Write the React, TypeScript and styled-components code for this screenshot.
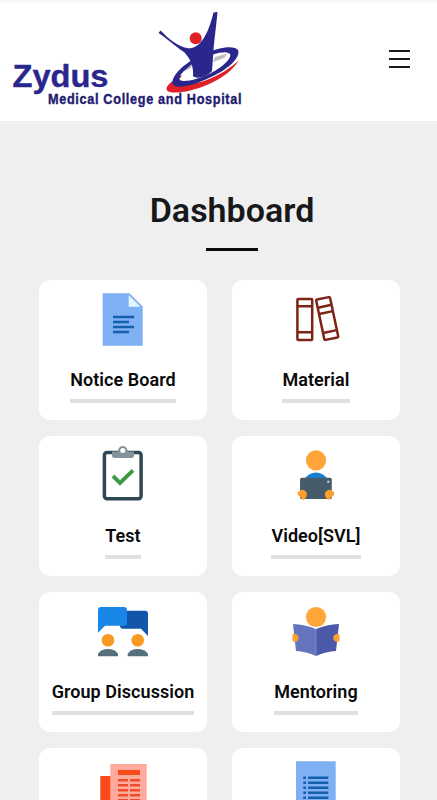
import React from 'react';
import styled, { createGlobalStyle } from 'styled-components';

const GlobalStyle = createGlobalStyle`
  * { box-sizing: border-box; }
  html, body { margin: 0; padding: 0; background: #efefef; }
  body { font-family: Roboto, 'Liberation Sans', sans-serif; overflow: hidden; }
`;

const Page = styled.div`
  height: 800px;
  overflow: hidden;
  background: #efefef;
`;

const Header = styled.header`
  display: flex;
  justify-content: space-between;
  align-items: flex-start;
  height: 121px;
  background: #fff;
  border-top: 3px solid #f8f8f8;
`;

const LogoArt = styled.svg`
  display: block;
  width: 300px;
  height: 118px;
  overflow: visible;
`;

const MenuButton = styled.button`
  display: flex;
  flex-direction: column;
  gap: 6px;
  margin: 47px 27px 0 0;
  padding: 0;
  border: 0;
  background: none;
`;

const MenuLine = styled.span`
  display: block;
  width: 21px;
  height: 2px;
  background: #1a1a1a;
`;

const Main = styled.main`
  display: flex;
  flex-direction: column;
  padding: 66px 37px 0 39px;
`;

const Heading = styled.h1`
  align-self: center;
  display: flex;
  flex-direction: column;
  align-items: center;
  margin: 0 0 28px 25px;
  height: 64.5px;
  font-size: 34px;
  line-height: 46px;
  font-weight: 600;
  color: #17181a;
  white-space: nowrap;

  &::after {
    content: '';
    width: 52px;
    height: 3px;
    margin-top: 15px;
    background: #0b0b0b;
  }
`;

const Grid = styled.div`
  display: grid;
  grid-template-columns: 168px 168px;
  grid-auto-rows: 140.5px;
  gap: 15.5px 25px;
`;

const Card = styled.a`
  display: flex;
  flex-direction: column;
  align-items: center;
  padding-top: 10.5px;
  border-radius: 11px;
  background: #fff;
  color: #0a0a0a;
`;

const CardIcon = styled.svg`
  display: block;
  flex: none;
  width: 60px;
  height: 60px;
`;

const CardLabel = styled.span`
  margin-top: 18px;
  padding-bottom: 8px;
  border-bottom: 4px solid #e0e0e0;
  font-size: 18px;
  line-height: 23px;
  font-weight: 600;
  letter-spacing: 0.05px;
  white-space: nowrap;
`;

const Logo = () => (
  <LogoArt viewBox="0 3 300 118" role="img" aria-label="Zydus Medical College and Hospital">
    <path d="M179 77C170 82 165 87 167 90.5C171 95 191 92 208 84.500C223 78 234 69 239 60C231 68 218 76 204 81C192 85 179 86 177 83C176 81 177 79 179 77Z" fill="#df2027" />
    <path d="M177.500 76.500L182 75.500L180 78.500Z" fill="#df2027" />
    <path fillRule="evenodd" d="M172.500 83C172 74 187 61 204 54C219 47 234 45 238 50C241 57 229 69 211 77C195 85 174 91 172.500 83ZM180 80C184 83 199 79 211 73C223 67 232 58 230 54C226 50 212 54 202 59C190 65 177 75 180 80Z" fill="#29278c" />
    <path d="M215 57L228 53.500L224 58L213 62Z M193 63L183 72L191 68Z" fill="#bdbdc1" />
    <path d="M160.500 30.500C168 38 177 46.500 188 48.300C198 49 207 39 213.500 12.500L217.500 12C216 28 214 42 213.500 51L212 71C208 76 197 80 193 76C194 67 190 58 184 52C175 46 165 37 158.500 33Z" fill="#29278c" />
    <circle cx="195.700" cy="38.300" r="6" fill="#df2027" />
    <text x="12.500" y="87.300" textLength="96" lengthAdjust="spacingAndGlyphs" fontFamily="'Liberation Sans', sans-serif" fontWeight="700" fontSize="32" fill="#29278c" stroke="#29278c" strokeWidth="0.400">Zydus</text>
    <text transform="translate(48 104.300) scale(0.820 1)" textLength="236" lengthAdjust="spacing" fontFamily="'Liberation Sans', sans-serif" fontWeight="700" fontSize="15.500" fill="#1d1b70" stroke="#1d1b70" strokeWidth="0.400">Medical College and Hospital</text>
  </LogoArt>
);

const NoticeIcon = () => (
  <CardIcon viewBox="0 0 60 60">
    <path d="M9.700 3.300H36.500L49.700 16.500V55.700H9.700Z" fill="#7eb0f3" />
    <path d="M35.700 5V16.700H47.500Z" fill="#e1f5fe" />
    <path d="M20 27H41M20 32H36M20 37H41M20 42H36" stroke="#1460ad" strokeWidth="2.300" />
  </CardIcon>
);

const MaterialIcon = () => (
  <CardIcon viewBox="0 0 60 60" fill="none" stroke="#7d2417" strokeWidth="2.500" strokeLinejoin="round">
    <rect x="11.400" y="9" width="14.800" height="41" rx="1" />
    <path d="M12 16.300H26M12 42.300H26" />
    <path d="M30.200 10.800Q30 9.800 31 9.500L42.800 7.100Q43.900 6.900 44.100 8L52.200 46.200Q52.400 47.200 51.400 47.500L39.600 49.900Q38.500 50.100 38.300 49Z" />
    <path d="M32 17.700L45.500 14.800M33.300 24L46.800 21.100M37 43L50.800 40.100" />
  </CardIcon>
);

const TestIcon = () => (
  <CardIcon viewBox="0 0 60 60">
    <rect x="11.400" y="6.400" width="36.700" height="46.400" rx="2.700" fill="#fff" stroke="#2f4755" strokeWidth="3.500" />
    <path fillRule="evenodd" d="M19 5.500H25.200A4.900 4.900 0 0 1 34.600 5.500H41V9.600Q41 12.100 38.500 12.100H21.500Q19 12.100 19 9.600Z" fill="#82939b" />
    <circle cx="29.800" cy="4.700" r="4.700" fill="#82939b" />
    <circle cx="29.800" cy="4.500" r="2.500" fill="#fff" />
    <path d="M20 30L27 37L40 24.300" fill="none" stroke="#3d9c43" strokeWidth="3.900" />
  </CardIcon>
);

const VideoIcon = () => (
  <CardIcon viewBox="0 0 60 60">
    <circle cx="30" cy="14.300" r="10.100" fill="#ffa53a" />
    <path d="M18.500 32.500C22 28.500 25.500 26.500 30 26.500S38 28.500 41.500 32.500Z" fill="#197dd2" />
    <rect x="14" y="31.800" width="31.800" height="21.300" rx="1.700" fill="#465c6b" />
    <circle cx="42.300" cy="35.800" r="1.200" fill="#bdcad3" />
    <path d="M14 44.500L11.800 46.300Q11 48 12.300 49.300L17 53.700Q17.900 54.200 18.700 53.200L20.300 50.700Q22 47 19 44.800Q16.500 43 14 44.500Z" fill="#ffa02c" />
    <path d="M45.800 44.500L48 46.300Q48.800 48 47.500 49.300L42.800 53.700Q41.900 54.200 41.100 53.200L39.500 50.700Q37.800 47 40.800 44.800Q43.300 43 45.800 44.500Z" fill="#ffa02c" />
  </CardIcon>
);

const GroupIcon = () => (
  <CardIcon viewBox="0 0 60 60">
    <path d="M30 8.700H52Q55 8.700 55 11.700V34L48 26.700H30Q27 26.700 27 23.700V11.700Q27 8.700 30 8.700Z" fill="#1256ac" />
    <path d="M8 5H31Q34 5 34 8V20.700Q34 23.700 31 23.700H12L5 30.700V8Q5 5 8 5Z" fill="#1887e8" />
    <circle cx="15" cy="38.300" r="6.300" fill="#f99a20" />
    <circle cx="44.700" cy="38.300" r="6.300" fill="#f99a20" />
    <path d="M5 54.300V51.800C7 48.800 10.500 47 15 47S23 48.800 25 51.800V54.300Z" fill="#566f7c" />
    <path d="M34.700 54.300V51.800C36.700 48.800 40.200 47 44.700 47S53 48.800 55 51.800V54.300Z" fill="#566f7c" />
  </CardIcon>
);

const MentoringIcon = () => (
  <CardIcon viewBox="0 0 60 60">
    <circle cx="30" cy="15" r="10.100" fill="#ffa53a" />
    <path d="M7 22Q19 22.500 30 27V54Q20 49.500 10 49Z" fill="#6574bd" />
    <path d="M53 22Q41 22.500 30 27V54Q40 49.500 50 49Z" fill="#4c58a8" />
    <path d="M30 27V54" stroke="#8290cd" strokeWidth="0.800" />
    <path d="M6.800 32L9 31.700Q12.500 32.700 12.500 36T9 39.900L6.800 39.600Q6 36 6.800 32Z" fill="#ffa02c" />
    <path d="M53.200 32L51 31.700Q47.300 32.700 47.300 36T51 39.900L53.200 39.600Q54 36 53.200 32Z" fill="#ffa02c" />
  </CardIcon>
);

const NewsIcon = () => (
  <CardIcon viewBox="0 0 60 60">
    <path d="M7.300 18H18V60H7.300Z" fill="#f94a1c" />
    <path d="M17.300 6H53.700V60H17.300Z" fill="#ffaa9c" />
    <path d="M25 12H47V17H25Z" fill="#f94a1c" />
    <path d="M25 22.200H35M37 22.200H47M25 27.200H35M37 27.200H47M25 32.200H35M37 32.200H47M25 37.200H35M37 37.200H47M25 42.200H35M37 42.200H47" stroke="#ee4d28" strokeWidth="2.400" />
  </CardIcon>
);

const ListIcon = () => (
  <CardIcon viewBox="0 0 60 60">
    <path d="M10 3.300H49.700V56H10Z" fill="#7eb0f3" />
    <path d="M17.300 19.700H20M22 19.700H42.300M17.300 24.700H20M22 24.700H42.300M17.300 29.700H20M22 29.700H42.300M17.300 34.700H20M22 34.700H42.300M17.300 39.700H20M22 39.700H42.300" stroke="#1460ad" strokeWidth="2.400" />
  </CardIcon>
);

const items = [
  { label: 'Notice Board', Icon: NoticeIcon },
  { label: 'Material', Icon: MaterialIcon },
  { label: 'Test', Icon: TestIcon },
  { label: 'Video[SVL]', Icon: VideoIcon },
  { label: 'Group Discussion', Icon: GroupIcon },
  { label: 'Mentoring', Icon: MentoringIcon },
  { label: '', Icon: NewsIcon },
  { label: '', Icon: ListIcon },
];

export default function App() {
  return (
    <Page>
      <GlobalStyle />
      <Header>
        <Logo />
        <MenuButton aria-label="Menu">
          <MenuLine />
          <MenuLine />
          <MenuLine />
        </MenuButton>
      </Header>
      <Main>
        <Heading>Dashboard</Heading>
        <Grid>
          {items.map(({ label, Icon }, index) => (
            <Card key={index}>
              <Icon />
              {label && <CardLabel>{label}</CardLabel>}
            </Card>
          ))}
        </Grid>
      </Main>
    </Page>
  );
}
